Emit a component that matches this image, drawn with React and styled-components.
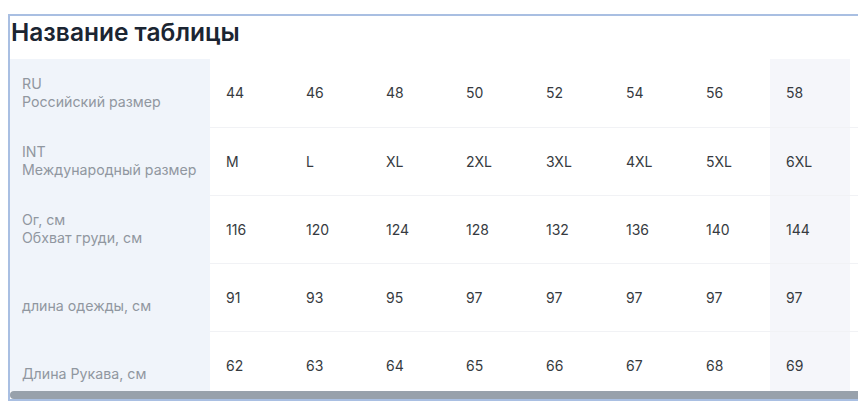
import React from 'react';
import styled, { createGlobalStyle } from 'styled-components';

const GlobalStyle = createGlobalStyle`
  html, body {
    margin: 0;
    padding: 0;
    overflow: hidden;
    background: #fff;
  }
  body {
    padding: 14px 0 0 8px;
    font-family: Inter, "Noto Sans", sans-serif;
  }
`;

const Frame = styled.div`
  width: 900px;
  border: 2px solid #a9bfe2;
  background: #fff;
`;

const Title = styled.h2`
  margin: 0;
  height: 43px;
  padding: 0 0 0 1px;
  box-sizing: border-box;
  font-size: 24.5px;
  font-weight: 600;
  line-height: 33px;
  color: #1b2532;
`;

const Viewport = styled.div`
  height: 332px;
  overflow: hidden;
`;

const ScrollTrack = styled.div`
  height: 8px;
  background: #fff;
`;

const ScrollThumb = styled.div`
  height: 100%;
  background: #98a1ab;
  border-radius: 4px;
`;

const Table = styled.table`
  border-collapse: collapse;
  table-layout: fixed;
  width: 920px;
`;

const Label = styled.th`
  width: 200px;
  height: 68px;
  padding: 0 0 0 12px;
  box-sizing: border-box;
  background: #f0f4fa;
  text-align: left;
  font-weight: 400;
  font-size: 14.2px;
  line-height: 18px;
  color: #9097a0;
  vertical-align: middle;
`;

const Line = styled.div`
  height: 18px;
  white-space: nowrap;
`;

const Cell = styled.td`
  width: 80px;
  height: 68px;
  padding: 0 0 0 16px;
  box-sizing: border-box;
  font-size: 14px;
  color: #363a40;
  white-space: nowrap;
  border-bottom: 1px solid #f1f2f5;
  background: ${p => (p.$marked ? '#f5f6fa' : '#fff')};
`;

const rows = [
  { code: 'RU', name: 'Российский размер', values: ['44', '46', '48', '50', '52', '54', '56', '58'] },
  { code: 'INT', name: 'Международный размер', values: ['M', 'L', 'XL', '2XL', '3XL', '4XL', '5XL', '6XL'] },
  { code: 'Ог, см', name: 'Обхват груди, см', values: ['116', '120', '124', '128', '132', '136', '140', '144'] },
  { code: '', name: 'длина одежды, см', values: ['91', '93', '95', '97', '97', '97', '97', '97'] },
  { code: '', name: 'Длина Рукава, см', values: ['62', '63', '64', '65', '66', '67', '68', '69'] },
];

const markedColumn = 7;

function App() {
  return (
    <>
      <GlobalStyle />
      <Frame>
        <Title>Название таблицы</Title>
        <Viewport>
          <Table>
            <tbody>
              {rows.map(row => (
                <tr key={row.name}>
                  <Label>
                    <Line>{row.code}</Line>
                    <Line>{row.name}</Line>
                  </Label>
                  {row.values.map((v, i) => (
                    <Cell key={i} $marked={i === markedColumn}>
                      {v}
                    </Cell>
                  ))}
                  <Cell />
                </tr>
              ))}
            </tbody>
          </Table>
        </Viewport>
        <ScrollTrack>
          <ScrollThumb style={{ width: `${(900 / 920) * 100}%` }} />
        </ScrollTrack>
      </Frame>
    </>
  );
}

export default App;
